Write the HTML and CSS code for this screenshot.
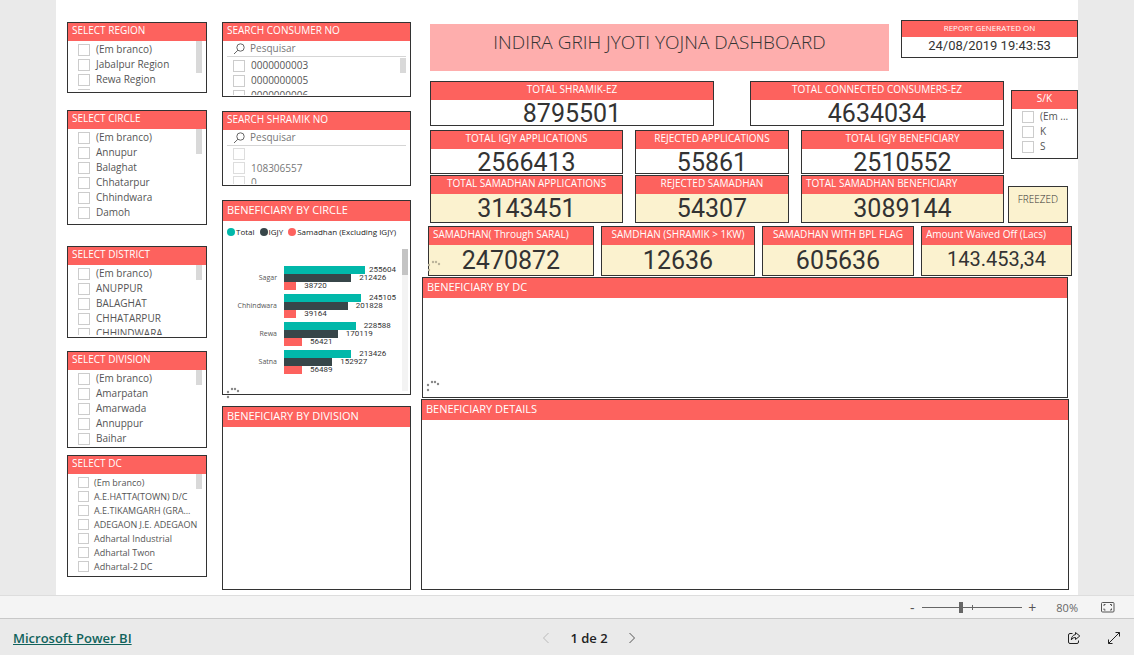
FILE: index.html
```
<!DOCTYPE html>
<html lang="pt-BR">
<head>
<meta charset="utf-8">
<title>Indira Grih Jyoti Yojna Dashboard</title>
<link rel="stylesheet" href="styles.css">
</head>
<body>
<main class="stage">
  <div class="canvas">
    <div class="slicers">
      <section class="panel region">
        <h2 class="head">SELECT REGION</h2>
        <div class="list">
          <label class="item"><input type="checkbox">(Em branco)</label>
          <label class="item"><input type="checkbox">Jabalpur Region</label>
          <label class="item"><input type="checkbox">Rewa Region</label>
          <label class="item"><input type="checkbox" aria-label="Next region"></label>
          <span class="thumb tall"></span>
        </div>
      </section>
      <section class="panel circle">
        <h2 class="head">SELECT CIRCLE</h2>
        <div class="list">
          <label class="item"><input type="checkbox">(Em branco)</label>
          <label class="item"><input type="checkbox">Annupur</label>
          <label class="item"><input type="checkbox">Balaghat</label>
          <label class="item"><input type="checkbox">Chhatarpur</label>
          <label class="item"><input type="checkbox">Chhindwara</label>
          <label class="item"><input type="checkbox">Damoh</label>
          <span class="thumb medium"></span>
        </div>
      </section>
      <section class="panel district">
        <h2 class="head">SELECT DISTRICT</h2>
        <div class="list">
          <label class="item"><input type="checkbox">(Em branco)</label>
          <label class="item"><input type="checkbox">ANUPPUR</label>
          <label class="item"><input type="checkbox">BALAGHAT</label>
          <label class="item"><input type="checkbox">CHHATARPUR</label>
          <label class="item"><input type="checkbox">CHHINDWARA</label>
          <span class="thumb"></span>
        </div>
      </section>
      <section class="panel division">
        <h2 class="head">SELECT DIVISION</h2>
        <div class="list">
          <label class="item"><input type="checkbox">(Em branco)</label>
          <label class="item"><input type="checkbox">Amarpatan</label>
          <label class="item"><input type="checkbox">Amarwada</label>
          <label class="item"><input type="checkbox">Annuppur</label>
          <label class="item"><input type="checkbox">Baihar</label>
          <span class="thumb"></span>
        </div>
      </section>
      <section class="panel dc">
        <h2 class="head">SELECT DC</h2>
        <div class="list small">
          <label class="item"><input type="checkbox">(Em branco)</label>
          <label class="item"><input type="checkbox">A.E.HATTA(TOWN) D/C</label>
          <label class="item"><input type="checkbox">A.E.TIKAMGARH (GRA...</label>
          <label class="item"><input type="checkbox">ADEGAON J.E. ADEGAON</label>
          <label class="item"><input type="checkbox">Adhartal Industrial</label>
          <label class="item"><input type="checkbox">Adhartal Twon</label>
          <label class="item"><input type="checkbox">Adhartal-2 DC</label>
          <span class="thumb"></span>
        </div>
      </section>
    </div>

    <div class="middle">
      <section class="panel search">
        <h2 class="head">SEARCH CONSUMER NO</h2>
        <label class="searchbox">
          <svg viewBox="0 0 12 12" width="12" height="12"><circle cx="7.5" cy="4.5" r="3.7"/><path d="M4.9 7.2 1 11"/></svg>
          <input type="search" placeholder="Pesquisar" aria-label="Pesquisar consumer no">
        </label>
        <div class="list">
          <label class="item"><input type="checkbox">0000000003</label>
          <label class="item"><input type="checkbox">0000000005</label>
          <label class="item"><input type="checkbox">0000000006</label>
          <span class="thumb"></span>
        </div>
      </section>
      <section class="panel search">
        <h2 class="head">SEARCH SHRAMIK NO</h2>
        <label class="searchbox">
          <svg viewBox="0 0 12 12" width="12" height="12"><circle cx="7.5" cy="4.5" r="3.7"/><path d="M4.9 7.2 1 11"/></svg>
          <input type="search" placeholder="Pesquisar" aria-label="Pesquisar shramik no">
        </label>
        <div class="list loading">
          <label class="item"><input type="checkbox" aria-label="blank"></label>
          <label class="item"><input type="checkbox">108306557</label>
          <label class="item"><input type="checkbox">0</label>
        </div>
      </section>
      <section class="panel chart">
        <h2 class="head big">BENEFICIARY BY CIRCLE</h2>
        <div class="legend">
          <span class="key total">Total</span>
          <span class="key igjy">IGJY</span>
          <span class="key samadhan">Samadhan (Excluding IGJY)</span>
        </div>
        <div class="plot">
          <div class="groups">
            <div class="group"><span class="cat">Sagar</span><div class="bars">
              <div class="row"><i class="bar total" style="width:72%"></i><i class="gap"></i><b>255604</b></div>
              <div class="row"><i class="bar igjy" style="width:60%"></i><i class="gap"></i><b>212426</b></div>
              <div class="row"><i class="bar samadhan" style="width:11%"></i><i class="gap"></i><b>38720</b></div>
            </div></div>
            <div class="group"><span class="cat">Chhindwara</span><div class="bars">
              <div class="row"><i class="bar total" style="width:69%"></i><i class="gap"></i><b>245105</b></div>
              <div class="row"><i class="bar igjy" style="width:57%"></i><i class="gap"></i><b>201828</b></div>
              <div class="row"><i class="bar samadhan" style="width:11%"></i><i class="gap"></i><b>39164</b></div>
            </div></div>
            <div class="group"><span class="cat">Rewa</span><div class="bars">
              <div class="row"><i class="bar total" style="width:64%"></i><i class="gap"></i><b>228588</b></div>
              <div class="row"><i class="bar igjy" style="width:48%"></i><i class="gap"></i><b>170119</b></div>
              <div class="row"><i class="bar samadhan" style="width:16%"></i><i class="gap"></i><b>56421</b></div>
            </div></div>
            <div class="group"><span class="cat">Satna</span><div class="bars">
              <div class="row"><i class="bar total" style="width:60%"></i><i class="gap"></i><b>213426</b></div>
              <div class="row"><i class="bar igjy" style="width:43%"></i><i class="gap"></i><b>152927</b></div>
              <div class="row"><i class="bar samadhan" style="width:16%"></i><i class="gap"></i><b>56489</b></div>
            </div></div>
          </div>
          <div class="track"></div>
        </div>
        <svg class="spinner low" viewBox="0 0 14 12" width="14" height="12"><circle cx="2" cy="5" r="1.2"/><circle cx="6" cy="2" r="1.2"/><circle cx="9" cy="2" r="1.2"/><circle cx="12" cy="4" r="1.2"/><circle cx="2" cy="10" r="1.2"/></svg>
      </section>
      <section class="panel grow">
        <h2 class="head big">BENEFICIARY BY DIVISION</h2>
      </section>
    </div>

    <div class="main">
      <header class="top">
        <h1 class="title">INDIRA GRIH JYOTI YOJNA DASHBOARD</h1>
        <section class="panel stamp">
          <h2 class="head center">REPORT GENERATED ON</h2>
          <p class="date">24/08/2019 19:43:53</p>
        </section>
      </header>
      <div class="body">
        <div class="kpis">
          <div class="cards two">
            <section class="panel card"><h2 class="head center">TOTAL SHRAMIK-EZ</h2><p class="value">8795501</p></section>
            <section class="panel card"><h2 class="head center">TOTAL CONNECTED CONSUMERS-EZ</h2><p class="value">4634034</p></section>
          </div>
          <div class="cards three">
            <section class="panel card"><h2 class="head center">TOTAL IGJY APPLICATIONS</h2><p class="value">2566413</p></section>
            <section class="panel card"><h2 class="head center">REJECTED APPLICATIONS</h2><p class="value">55861</p></section>
            <section class="panel card"><h2 class="head center">TOTAL IGJY BENEFICIARY</h2><p class="value">2510552</p></section>
          </div>
          <div class="cards three last">
            <section class="panel card cream"><h2 class="head center">TOTAL SAMADHAN APPLICATIONS</h2><p class="value">3143451</p></section>
            <section class="panel card cream"><h2 class="head center">REJECTED SAMADHAN</h2><p class="value">54307</p></section>
            <section class="panel card cream"><h2 class="head">TOTAL SAMADHAN BENEFICIARY</h2><p class="value">3089144</p></section>
          </div>
        </div>
        <div class="side">
          <section class="panel sk">
            <h2 class="head center">S/K</h2>
            <div class="list">
              <label class="item"><input type="checkbox">(Em ...</label>
              <label class="item"><input type="checkbox">K</label>
              <label class="item"><input type="checkbox">S</label>
            </div>
          </section>
          <p class="panel cream freezed">FREEZED</p>
        </div>
      </div>
      <div class="cards four">
        <section class="panel card cream"><h2 class="head">SAMADHAN( Through SARAL)</h2><p class="value">2470872</p>
          <svg class="spinner pale" viewBox="0 0 14 12" width="14" height="12"><circle cx="2" cy="5" r="1.2"/><circle cx="6" cy="2" r="1.2"/><circle cx="9" cy="2" r="1.2"/><circle cx="12" cy="4" r="1.2"/><circle cx="2" cy="10" r="1.2"/></svg>
        </section>
        <section class="panel card cream"><h2 class="head center">SAMDHAN (SHRAMIK &gt; 1KW)</h2><p class="value">12636</p></section>
        <section class="panel card cream"><h2 class="head center">SAMADHAN WITH BPL FLAG</h2><p class="value">605636</p></section>
        <section class="panel card cream"><h2 class="head">Amount Waived Off (Lacs)</h2><p class="value money">143.453,34</p></section>
      </div>
      <section class="panel bydc">
        <h2 class="head big">BENEFICIARY BY DC</h2>
        <svg class="spinner" viewBox="0 0 14 12" width="14" height="12"><circle cx="2" cy="5" r="1.2"/><circle cx="6" cy="2" r="1.2"/><circle cx="9" cy="2" r="1.2"/><circle cx="12" cy="4" r="1.2"/><circle cx="2" cy="10" r="1.2"/></svg>
      </section>
      <section class="panel grow details">
        <h2 class="head big">BENEFICIARY DETAILS</h2>
      </section>
    </div>
  </div>
</main>

<div class="zoombar">
  <button type="button" aria-label="Zoom out">-</button>
  <input class="slider" type="range" min="0" max="100" value="38" aria-label="Zoom">
  <button type="button" aria-label="Zoom in">+</button>
  <span class="percent">80%</span>
  <button type="button" class="fit" aria-label="Fit to page">
    <svg viewBox="0 0 14 12" width="14" height="12"><rect x=".5" y="1.5" width="12.5" height="9.5" rx="1"/><path d="M3 5V3.500h1.500M9 3.500h1.500V5M10.500 7.500V9H9M4.500 9H3V7.500"/></svg>
  </button>
</div>

<footer class="footer">
  <a class="brand" href="#">Microsoft Power BI</a>
  <nav class="pager">
    <button type="button" class="off" aria-label="Previous page"><svg viewBox="0 0 8 12" width="8" height="12"><path d="M6.500 1 1.500 6l5 5"/></svg></button>
    <span>1 de 2</span>
    <button type="button" aria-label="Next page"><svg viewBox="0 0 8 12" width="8" height="12"><path d="m1.500 1 5 5-5 5"/></svg></button>
  </nav>
  <div class="tools">
    <button type="button" aria-label="Share"><svg viewBox="0 0 14 14" width="14" height="14"><path d="M5.500 2.500H3a1.500 1.500 0 0 0-1.500 1.500v7A1.500 1.500 0 0 0 3 12.500h7a1.500 1.500 0 0 0 1.500-1.500V9.500"/><path d="M8.500 1.500 12.800 5 8.500 8.500v-2C6.500 6.500 5.300 7.200 4.300 9 4.500 6 6 3.800 8.500 3.600z"/></svg></button>
    <button type="button" aria-label="Full screen"><svg viewBox="0 0 14 14" width="14" height="14"><path d="M1.500 12.500l11-11M8.500 1.500h4v4M1.500 8.500v4h4"/></svg></button>
  </div>
</footer>
</body>
</html>
```
FILE: styles.css
```
* { box-sizing: border-box; }

body {
  margin: 0;
  min-height: 100vh;
  display: flex;
  flex-direction: column;
  background: #eaeaea;
  color: #333;
  font: 10px/15px "Open Sans", "Noto Sans", sans-serif;
}

h1, h2, p { margin: 0; font-weight: 400; }

button {
  border: 0;
  padding: 0;
  background: none;
  color: #555;
  font: inherit;
  display: flex;
  align-items: center;
  justify-content: center;
}

svg { fill: none; stroke: currentColor; display: block; flex: none; }

.stage { flex: 1; display: flex; padding: 0 56px; }

.canvas {
  flex: 1;
  min-width: 0;
  display: grid;
  grid-template-columns: 140fr 204fr 667fr;
  background: #fff;
  padding: 20px 0 5px 11px;
}

.slicers, .middle, .main { display: flex; flex-direction: column; min-width: 0; }
.slicers { padding-top: 2px; }
.middle { padding: 2px 0 0 15px; gap: 14px; }
.main { padding-left: 10px; }

/* Panels */
.panel { position: relative; border: 1px solid #333; background: #fff; }
.head {
  height: 18px;
  padding: 0 4px;
  background: #fd625e;
  color: #fff;
  font-size: 10px;
  line-height: 15px;
  white-space: nowrap;
}
.head.big { height: 20px; font-size: 11px; line-height: 18px; }
.head.center { padding: 0; text-align: center; }
.panel.cream { background: #fbf2cf; }
.grow { flex: 1; }

.region { height: 71px; margin-bottom: 17px; }
.circle { height: 115px; margin-bottom: 21px; }
.district { height: 92px; margin-bottom: 13px; }
.division { height: 97px; margin-bottom: 7px; }
.dc { height: 122px; }

.slicers .panel, .search, .sk { display: flex; flex-direction: column; }

/* Checkbox lists */
.list {
  position: relative;
  flex: 1;
  min-height: 0;
  margin-bottom: 2px;
  padding: 1px 0 0 10px;
  overflow: hidden;
}
.item {
  display: flex;
  align-items: center;
  gap: 6px;
  height: 15px;
  color: #555;
  white-space: nowrap;
}
.item input {
  appearance: none;
  flex: none;
  width: 12px;
  height: 12px;
  margin: 0;
  border: 1px solid #ccc;
  background: #fff;
}
.small { font-size: 9px; }
.small .item { height: 14px; gap: 5px; }
.small .item input { width: 11px; height: 11px; }
.thumb {
  position: absolute;
  top: 0;
  right: 4px;
  width: 6px;
  height: 15px;
  background: #d9d9d9;
}
.thumb.tall { height: 32px; }
.thumb.medium { height: 25px; }

/* Search slicers */
.search { height: 75px; }
.search .list { padding-top: 0; margin-bottom: 1px; }
.searchbox {
  display: flex;
  align-items: center;
  gap: 5px;
  height: 16px;
  margin: 0 4px 1px;
  padding-left: 6px;
  border-bottom: 1px solid #d5d5d5;
  color: #666;
}
.searchbox input {
  flex: 1;
  min-width: 0;
  border: 0;
  padding: 0;
  outline: 0;
  background: none;
  font: inherit;
  height: 15px;
}
.searchbox input::placeholder { color: #777; opacity: 1; }
.loading .item { height: 14px; color: #777; }
.loading .item input { border-color: #ddd; }

/* Bar chart */
.chart { height: 195px; margin-bottom: -3px; }
.legend { display: flex; gap: 5px; padding: 3px 4px; color: #222; font-size: 8px; white-space: nowrap; }
.key { display: flex; align-items: center; gap: 1px; }
.key::before { content: ""; width: 8px; height: 8px; border-radius: 50%; background: currentColor; }
.key.total::before, .bar.total { background: #01b8aa; }
.key.igjy::before, .bar.igjy { background: #374649; }
.key.samadhan::before, .bar.samadhan { background: #fd625e; }
.plot { display: flex; justify-content: space-between; padding: 7px 2px 0 0; }
.groups { flex: 1; display: grid; align-content: start; gap: 4px; padding: 17px 6px 0 0; }
.group { display: grid; grid-template-columns: 54px 1fr; column-gap: 7px; align-items: center; }
.cat { text-align: right; font-size: 7px; line-height: 10px; color: #555; }
.row { display: flex; align-items: center; height: 8px; }
.bar { flex: none; height: 8px; }
.gap { flex: 0 1 8px; }
.row b { flex: none; font: 400 8px/8px Roboto, sans-serif; color: #333; }
.track { width: 6px; height: 142px; background: linear-gradient(#c4c4c4 26px, #f3f3f3 26px); }

.spinner { position: absolute; left: 3px; bottom: 5px; fill: #888; stroke: none; }
.spinner.low { bottom: -5px; }
.spinner.pale { left: -2px; bottom: 3px; fill: #bbb49a; }

/* Headline */
.top { display: grid; grid-template-columns: 459fr 177fr; gap: 12px; padding-left: 9px; align-items: start; }
.title {
  margin-top: 4px;
  height: 47px;
  background: #feaead;
  text-align: center;
  font-size: 19px;
  font-weight: 300;
  line-height: 36px;
  white-space: nowrap;
}
.stamp .head { height: 16px; font-size: 8px; line-height: 13px; }
.date { text-align: center; font: 13px/18px Roboto, sans-serif; padding-bottom: 2px; }

/* KPI cards */
.body { display: grid; grid-template-columns: 574fr 70fr; column-gap: 4px; padding: 10px 0 0 9px; }
.cards { display: grid; }
.card { height: 44px; }
.two { grid-template-columns: 284fr 254fr; column-gap: 36px; margin-bottom: 4px; }
.two .card { height: 45px; }
.three { grid-template-columns: 193fr 154fr 203fr; column-gap: 12px; margin-bottom: 1px; }
.last .card { height: 48px; }
.four { grid-template-columns: 166fr 154fr 152fr 151fr; column-gap: 7px; padding: 2px 6px 1px 7px; }
.four .card { height: 50px; }
.value { text-align: center; font: 25px/28px Roboto, sans-serif; }
.last .value { line-height: 30px; }
.four .value { line-height: 32px; }
.four .money { font-size: 20px; line-height: 28px; }

.side { display: flex; flex-direction: column; align-items: flex-start; gap: 27px; padding-top: 9px; }
.sk { align-self: stretch; height: 69px; margin-left: 3px; }
.sk .list { padding-top: 0; }
.freezed { width: 60px; height: 37px; text-align: center; font-weight: 300; line-height: 25px; }

.bydc { height: 121px; margin: 0 10px 1px 1px; }
.details { margin-right: 9px; }

/* Bottom bars */
.zoombar {
  display: flex;
  align-items: center;
  justify-content: flex-end;
  height: 23px;
  padding-right: 19px;
  border-top: 1px solid #ddd;
  background: #f4f4f4;
  color: #666;
  font-size: 11px;
}
.zoombar button { width: 14px; font-size: 14px; }
.slider {
  appearance: none;
  width: 100px;
  height: 12px;
  margin: 0 3px;
  background:
    linear-gradient(#666, #666) center / 1px 5px no-repeat,
    linear-gradient(#666, #666) center / 100% 1px no-repeat;
}
.slider::-webkit-slider-thumb { appearance: none; width: 4px; height: 11px; background: #666; }
.percent { margin: 0 23px 0 17px; }

.footer {
  display: grid;
  grid-template-columns: 538fr 102px 494fr;
  align-items: center;
  height: 37px;
  border-top: 1px solid #c8c8c8;
  padding-top: 2px;
  font-size: 13px;
  line-height: 18px;
}
.brand { padding-left: 13px; color: #11635c; font-weight: 600; }
.pager { display: flex; align-items: center; justify-content: space-between; padding: 0 4px; color: #222; font-weight: 600; }
.pager .off { color: #bbb; }
.tools { display: flex; justify-content: flex-end; gap: 26px; padding-right: 13px; }
.tools button { color: #222; }
```
